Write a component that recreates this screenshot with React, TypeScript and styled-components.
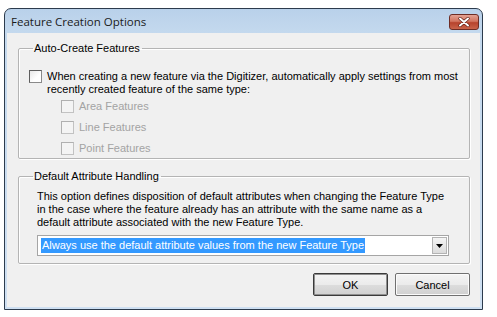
import styled, { createGlobalStyle } from "styled-components";

const GlobalStyle = createGlobalStyle`
  html, body {
    margin: 0;
    padding: 0;
    background: #ffffff;
  }
  body {
    font-family: "Liberation Sans", Arial, sans-serif;
    font-size: 11px;
    color: #000;
  }
`;

const Window = styled.div`
  box-sizing: border-box;
  margin: 8px 0 0 4px;
  width: 479px;
  height: 302px;
  border: 1px solid #2c3b4d;
  border-radius: 7px 7px 0 0;
  background: linear-gradient(to bottom, #b9d1ea 0px, #c4d9ee 24px, #cfe0f2 100%);
  display: flex;
  flex-direction: column;
  overflow: hidden;
`;

const TitleBar = styled.div`
  height: 24px;
  display: flex;
  align-items: center;
  justify-content: space-between;
  padding: 0 3px 0 6px;
`;

const Title = styled.span`
  font-family: "Open Sans", "Liberation Sans", sans-serif;
  font-size: 11.5px;
  color: #1a1a1a;
`;

const CloseButton = styled.div`
  box-sizing: border-box;
  width: 30px;
  height: 16px;
  margin-top: 2px;
  border: 1px solid #6e2d25;
  border-radius: 3px;
  background: linear-gradient(to bottom, #e4a293 0%, #d2745f 45%, #b7432d 55%, #c9634a 100%);
  display: flex;
  align-items: center;
  justify-content: center;
`;

const Client = styled.div`
  flex: 1;
  margin: 0 2px 2px 2px;
  background: #f0f0f0;
  padding: 9px 10px 0 11px;
  display: flex;
  flex-direction: column;
`;

const Group = styled.fieldset<{ $gapTop?: number }>`
  margin: ${(p) => p.$gapTop ?? 0}px 0 0 0;
  padding: 0 8px 0 10px;
  border: 1px solid #b4b4b4;
  border-radius: 2px;
  box-shadow: inset 1px 1px 0 #ffffff, 1px 1px 0 #ffffff;
`;

const Legend = styled.legend`
  padding: 0 2px 0 1px;
  margin-left: 4px;
  line-height: 13px;
  font-size: 11px;
`;

const CheckRow = styled.div<{ $indent?: number; $disabled?: boolean }>`
  display: flex;
  align-items: flex-start;
  gap: 5px;
  margin-left: ${(p) => p.$indent ?? 0}px;
  color: ${(p) => (p.$disabled ? "#a3a3a3" : "#000")};
  line-height: 13px;
`;

const Box = styled.span<{ $disabled?: boolean }>`
  box-sizing: border-box;
  flex: 0 0 13px;
  width: 13px;
  height: 13px;
  border: 1px solid ${(p) => (p.$disabled ? "#c2c2c2" : "#8a8a8a")};
  border-top-color: ${(p) => (p.$disabled ? "#b0b0b0" : "#5e5e5e")};
  border-left-color: ${(p) => (p.$disabled ? "#b0b0b0" : "#5e5e5e")};
  background: ${(p) =>
    p.$disabled
      ? "#f4f4f4"
      : "linear-gradient(135deg, #e8e8e8 0%, #ffffff 60%)"};
`;

const Lines = styled.div`
  white-space: nowrap;
`;

const MainOption = styled.div`
  margin-top: 15px;
`;

const SubOptions = styled.div`
  display: flex;
  flex-direction: column;
  gap: 8px;
  margin: 4px 0 3px 0;
`;

const Para = styled.p`
  margin: 7px 0 0 8px;
  line-height: 13px;
  white-space: nowrap;
`;

const Combo = styled.div`
  box-sizing: border-box;
  margin: 6px 12px 7px 8px;
  height: 21px;
  border: 1px solid #a5a5a5;
  background: #ffffff;
  display: flex;
  align-items: center;
  padding: 0 1px 0 3px;
`;

const ComboValue = styled.span`
  flex: 1;
  display: flex;
`;

const Selected = styled.span`
  background: #3399ff;
  color: #ffffff;
  line-height: 15px;
  padding: 0 1px;
  white-space: nowrap;
`;

const ArrowButton = styled.span`
  box-sizing: border-box;
  width: 15px;
  height: 17px;
  border: 1px solid #b3b3b3;
  background: linear-gradient(to bottom, #f4f4f4, #dcdcdc);
  display: flex;
  align-items: center;
  justify-content: center;
`;

const ButtonRow = styled.div`
  display: flex;
  justify-content: flex-end;
  gap: 7px;
  margin-top: 9px;
  padding-right: 0;
`;

const DialogButton = styled.div<{ $default?: boolean }>`
  box-sizing: border-box;
  width: 75px;
  height: 23px;
  border: 1px solid ${(p) => (p.$default ? "#3a3a3a" : "#707070")};
  border-radius: 2px;
  box-shadow: ${(p) =>
    p.$default ? "inset 0 0 0 1px #8f8f8f" : "inset 0 0 0 1px #fbfbfb"};
  background: linear-gradient(to bottom, #f4f4f4 0%, #ebebeb 50%, #dddddd 51%, #d0d0d0 100%);
  display: flex;
  align-items: center;
  justify-content: center;
  font-size: 11px;
`;

const subFeatures = ["Area Features", "Line Features", "Point Features"];

export default function App() {
  return (
    <>
      <GlobalStyle />
      <Window>
        <TitleBar>
          <Title>Feature Creation Options</Title>
          <CloseButton>
            <svg width="12" height="10" viewBox="0 0 12 10">
              <path
                d="M2 1.5 L10 8.5 M10 1.5 L2 8.5"
                stroke="#5a1a12"
                strokeWidth="3.2"
                strokeLinecap="round"
              />
              <path
                d="M2 1.5 L10 8.5 M10 1.5 L2 8.5"
                stroke="#ffffff"
                strokeWidth="2"
                strokeLinecap="round"
              />
            </svg>
          </CloseButton>
        </TitleBar>
        <Client>
          <Group>
            <Legend>Auto-Create Features</Legend>
            <MainOption>
              <CheckRow>
                <Box />
                <Lines>
                  When creating a new feature via the Digitizer, automatically apply settings from most
                  <br />
                  recently created feature of the same type:
                </Lines>
              </CheckRow>
            </MainOption>
            <SubOptions>
              {subFeatures.map((f) => (
                <CheckRow key={f} $indent={32} $disabled>
                  <Box $disabled />
                  <Lines>{f}</Lines>
                </CheckRow>
              ))}
            </SubOptions>
          </Group>
          <Group $gapTop={11}>
            <Legend>Default Attribute Handling</Legend>
            <Para>
              This option defines disposition of default attributes when changing the Feature Type
              <br />
              in the case where the feature already has an attribute with the same name as a
              <br />
              default attribute associated with the new Feature Type.
            </Para>
            <Combo>
              <ComboValue>
                <Selected>Always use the default attribute values from the new Feature Type</Selected>
              </ComboValue>
              <ArrowButton>
                <svg width="7" height="4" viewBox="0 0 7 4">
                  <path d="M0 0 H7 L3.5 4 Z" fill="#000" />
                </svg>
              </ArrowButton>
            </Combo>
          </Group>
          <ButtonRow>
            <DialogButton $default>OK</DialogButton>
            <DialogButton>Cancel</DialogButton>
          </ButtonRow>
        </Client>
      </Window>
    </>
  );
}
